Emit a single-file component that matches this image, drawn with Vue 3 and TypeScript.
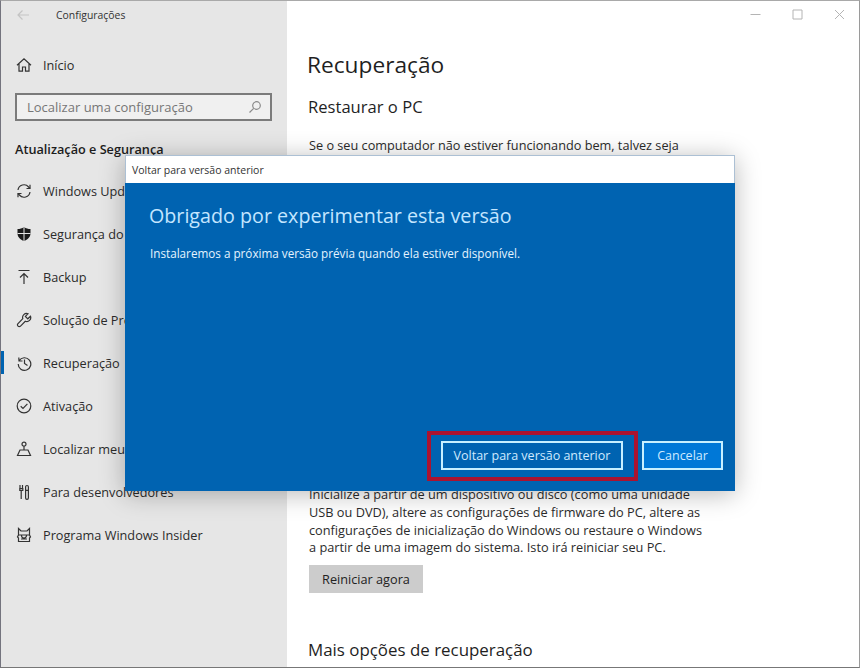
<script setup lang="ts">
interface NavItem { label: string; icon: string; active?: boolean }
const nav: NavItem[] = [
  { label: 'Windows Update', icon: 'update' },
  { label: 'Segurança do Windows', icon: 'shield' },
  { label: 'Backup', icon: 'backup' },
  { label: 'Solução de Problemas', icon: 'wrench' },
  { label: 'Recuperação', icon: 'history', active: true },
  { label: 'Ativação', icon: 'check' },
  { label: 'Localizar meu dispositivo', icon: 'find' },
  { label: 'Para desenvolvedores', icon: 'dev' },
  { label: 'Programa Windows Insider', icon: 'cat' },
]
</script>

<template>
  <div class="win">
    <aside class="side">
      <div class="titlebar">
        <svg class="back" width="14" height="12" viewBox="0 0 14 12"><path d="M13 6H2M6.500 1.500 2 6l4.500 4.500" /></svg>
        <span>Configurações</span>
      </div>
      <div class="home">
        <svg class="ico" viewBox="0 0 16 16"><path d="M1 8.200 8 1.800l7 6.400M3 7v7.200h3.500V10h3v4.200H13V7" /></svg>
        <span>Início</span>
      </div>
      <div class="search">
        <span>Localizar uma configuração</span>
        <svg width="14" height="14" viewBox="0 0 14 14"><circle cx="8.500" cy="5.500" r="3.800" /><path d="M5.700 8.300 1.500 12.500" /></svg>
      </div>
      <h2 class="section">Atualização e Segurança</h2>
      <ul class="nav">
        <li v-for="item in nav" :key="item.label" :class="{ active: item.active }">
          <svg class="ico" viewBox="0 0 16 16">
            <template v-if="item.icon === 'update'">
              <path d="M2 7a6 6 0 0 1 10.600-3L14 5.500M14 9a6 6 0 0 1-10.600 3L2 10.500" />
              <path d="M14 1.800v3.700h-3.500M2 14.200v-3.700h3.500" />
            </template>
            <template v-else-if="item.icon === 'shield'">
              <path class="fill" d="M8 1c2 1.500 4 2 6.500 2v4.500c0 3.500-2.800 6-6.500 7.500-3.700-1.500-6.500-4-6.500-7.500V3C4 3 6 2.500 8 1Z" />
              <path class="cut" d="M8 1v14M1.500 7.500h13" />
            </template>
            <template v-else-if="item.icon === 'backup'">
              <path d="M2.500 1.500h11M8 15V4.500M4 8.500l4-4 4 4" />
            </template>
            <template v-else-if="item.icon === 'wrench'">
              <path d="M14.500 4.200 11.800 6.800 9.400 4.400 12 1.700a4 4 0 0 0-5.200 5L1.800 11.800a1.800 1.800 0 0 0 2.500 2.500L9.300 9.300a4 4 0 0 0 5.200-5.100Z" />
            </template>
            <template v-else-if="item.icon === 'history'">
              <path d="M2.800 2.500 3 6h3.500M3.100 5.800A6.300 6.300 0 1 1 2.200 9" />
              <path d="M8.500 4.500v4l3 2" />
            </template>
            <template v-else-if="item.icon === 'check'">
              <circle cx="8" cy="8" r="6.800" />
              <path d="m4.700 8.300 2.300 2.200 4.400-4.600" />
            </template>
            <template v-else-if="item.icon === 'find'">
              <circle cx="8" cy="3.200" r="2" />
              <path d="M8 5.200V9M4 9h8l2.500 5.500h-13L4 9Z" />
            </template>
            <template v-else-if="item.icon === 'dev'">
              <path d="M4 1v3.500M6.500 1v3.500M3.800 4.500h3v1.800h-3ZM5.200 6.300V15M11 1.500a1.400 1.400 0 0 1 1.400 1.400v3.500h-2.800V2.900A1.400 1.400 0 0 1 11 1.500ZM9.600 6.400h2.800V14a1.400 1.400 0 0 1-2.800 0Z" />
            </template>
            <template v-else>
              <path d="M2.500 1.500 5 4h6l2.500-2.500V8l1 2-1 1v3.500h-11V11l-1-1 1-2ZM2.500 8h11M5.500 8.500a2.500 2.500 0 0 0 5 0M5 12h6" />
            </template>
          </svg>
          <span>{{ item.label }}</span>
        </li>
      </ul>
    </aside>

    <main class="main">
      <div class="controls">
        <svg width="11" height="11" viewBox="0 0 11 11"><path d="M0.500 5.500h10" /></svg>
        <svg width="11" height="11" viewBox="0 0 11 11"><path d="M1 1h9v9H1Z" /></svg>
        <svg width="11" height="11" viewBox="0 0 11 11"><path d="m1 1 9 9M10 1l-9 9" /></svg>
      </div>
      <h1>Recuperação</h1>
      <h3 class="sub">Restaurar o PC</h3>
      <p class="first">Se o seu computador não estiver funcionando bem, talvez seja</p>
      <p class="second">Inicialize a partir de um dispositivo ou disco (como uma unidade USB ou DVD), altere as configurações de firmware do PC, altere as configurações de inicialização do Windows ou restaure o Windows a partir de uma imagem do sistema. Isto irá reiniciar seu PC.</p>
      <button class="restart">Reiniciar agora</button>
      <h3 class="more">Mais opções de recuperação</h3>
    </main>

    <section class="dialog">
      <header class="dlg-title">Voltar para versão anterior</header>
      <div class="dlg-body">
        <h2>Obrigado por experimentar esta versão</h2>
        <p>Instalaremos a próxima versão prévia quando ela estiver disponível.</p>
        <div class="actions">
          <button class="btn primary">Voltar para versão anterior</button>
          <button class="btn cancel">Cancelar</button>
        </div>
      </div>
      <div class="mark"></div>
    </section>
  </div>
</template>

<style scoped>
.win {
  position: relative;
  width: 860px;
  height: 668px;
  box-sizing: border-box;
  display: flex;
  overflow: hidden;
  background: #fff;
  border-top: 1px solid #a9a9a9;
  border-left: 1px solid #74747e;
  border-right: 1px solid #9a9a9a;
  border-bottom: 1px solid #777;
  font-family: "Open Sans", "Noto Sans", sans-serif;
  color: #2b2b2b;
}
.side {
  width: 286px;
  flex: none;
  background: #e6e6e6;
  display: flex;
  flex-direction: column;
}
.titlebar {
  height: 27px;
  display: flex;
  align-items: center;
  gap: 26px;
  padding-left: 15px;
  font-size: 10.400px;
  color: #333;
}
.back path { fill: none; stroke: #c4c4c4; stroke-width: 1.200; }
.ico {
  width: 16px;
  height: 16px;
  flex: none;
  fill: none;
  stroke: #333;
  stroke-width: 1.200;
}
.ico .fill { fill: #1a1a1a; stroke: none; }
.ico .cut { stroke: #e6e6e6; stroke-width: 1; }
.home {
  display: flex;
  align-items: center;
  gap: 11px;
  height: 43px;
  margin-top: 15px;
  padding-left: 15px;
  font-size: 12.700px;
}
.search {
  box-sizing: border-box;
  width: 257px;
  height: 28px;
  margin: 7px 0 0 14px;
  padding: 0 8px 0 10px;
  display: flex;
  align-items: center;
  justify-content: space-between;
  background: #f0f0f0;
  border: 2px solid #7b7b7b;
  font-size: 13px;
  color: #767676;
}
.search svg { fill: none; stroke: #8a8a8a; stroke-width: 1.200; }
.section {
  margin: 19px 0 0 14px;
  font-size: 12.700px;
  line-height: 18px;
  font-weight: 600;
  color: #1c1c1c;
}
.nav {
  list-style: none;
  margin: 11px 0 0;
  padding: 0;
}
.nav li {
  position: relative;
  height: 43px;
  display: flex;
  align-items: center;
  gap: 11px;
  padding-left: 15px;
  font-size: 12.700px;
  white-space: nowrap;
}
.nav li.active::before {
  content: "";
  position: absolute;
  left: -1px;
  top: 10px;
  width: 4px;
  height: 23px;
  background: #0063b1;
}
.main {
  flex: 1;
  padding-left: 21px;
  position: relative;
}
.controls {
  position: absolute;
  top: 8px;
  right: 14px;
  display: flex;
  gap: 31px;
}
.controls svg { fill: none; stroke: #b4b4b4; stroke-width: 1; }
h1 {
  margin: 46px 0 0 -1px;
  font-size: 22.700px;
  line-height: 36px;
  font-weight: 400;
  color: #1f1f1f;
}
.sub {
  margin: 12px 0 0;
  font-size: 16.600px;
  line-height: 24px;
  font-weight: 400;
  color: #1f1f1f;
}
.first {
  margin: 17px 0 0 1px;
  font-size: 12.700px;
  line-height: 18px;
  white-space: nowrap;
}
.second {
  margin: 332px 0 0 1px;
  width: 400px;
  font-size: 12.750px;
  line-height: 17.800px;
}
.restart {
  display: block;
  margin: 8px 0 0 1px;
  width: 114px;
  height: 28px;
  border: none;
  padding: 0;
  background: #cccccc;
  font: inherit;
  font-size: 12.700px;
  color: #222;
}
.more {
  margin: 45px 0 0;
  font-size: 16.900px;
  line-height: 24px;
  font-weight: 400;
  color: #1f1f1f;
}
.dialog {
  position: absolute;
  left: 124px;
  top: 154px;
  width: 610px;
  height: 336px;
  display: flex;
  flex-direction: column;
  box-shadow: 0 3px 24px rgba(0, 0, 0, 0.28);
}
.dlg-title {
  height: 28px;
  flex: none;
  box-sizing: border-box;
  background: #fff;
  border: 1px solid rgba(90, 130, 170, 0.5);
  border-bottom: none;
  display: flex;
  align-items: center;
  padding-left: 6px;
  font-size: 10.500px;
  color: #333;
}
.dlg-body {
  flex: 1;
  background: #0063b1;
  padding: 19px 12px 21px 24px;
  display: flex;
  flex-direction: column;
  color: #e4f3ff;
}
.dlg-body h2 {
  margin: 0;
  font-size: 19.700px;
  line-height: 27px;
  font-weight: 400;
  color: #c4e6ff;
}
.dlg-body p {
  margin: 15px 0 0 1px;
  font-size: 11.700px;
  line-height: 18px;
}
.actions {
  margin-top: auto;
  display: flex;
  justify-content: flex-end;
  gap: 19px;
}
.btn {
  box-sizing: border-box;
  height: 29px;
  border: 2px solid #c8f0ff;
  padding: 0;
  font: inherit;
  font-size: 12.500px;
  color: #cfeaff;
}
.primary { width: 182px; background: #0063b1; }
.cancel { width: 81px; background: #0078d7; }
.mark {
  position: absolute;
  left: 302px;
  top: 276px;
  width: 211px;
  height: 50px;
  box-sizing: border-box;
  border: 4px solid #ab1330;
}
</style>
